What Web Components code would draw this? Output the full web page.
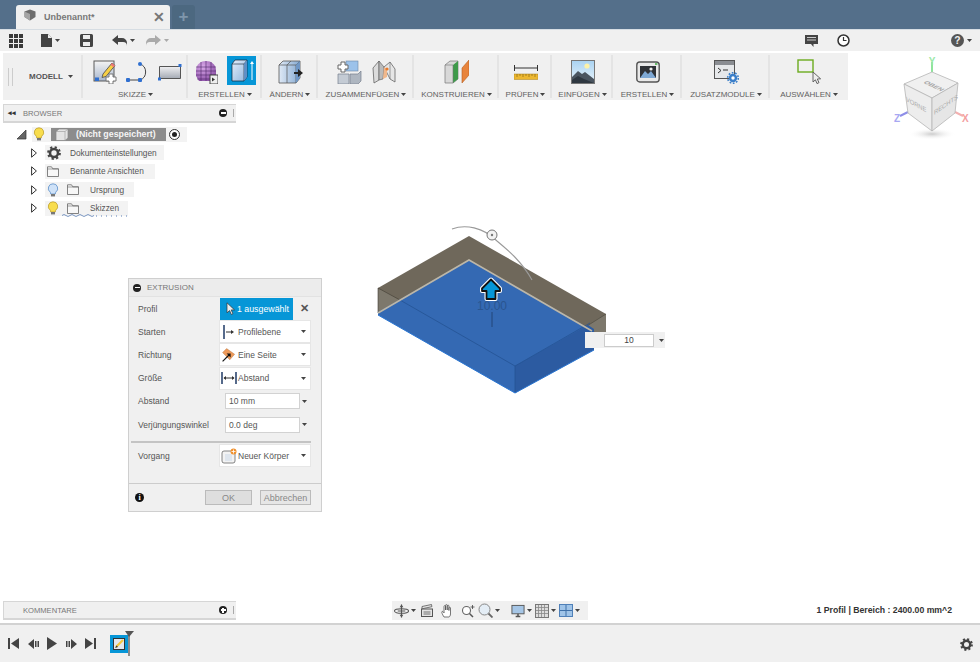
<!DOCTYPE html>
<html lang="de"><head><meta charset="utf-8"><title>Fusion</title>
<style>
html,body{margin:0;padding:0;background:#fff;overflow:hidden}
body{font:9px "Liberation Sans",Arial,sans-serif;color:#555}
</style></head><body>
<fx-app>
  <fx-titlebar></fx-titlebar>
  <fx-quickbar></fx-quickbar>
  <fx-toolbar>
    <fx-modeswitch></fx-modeswitch>
    <tool-group label="SKIZZE" w="105" gap="8" pad="4"><fx-icon name="sketch"></fx-icon><fx-icon name="arc"></fx-icon><fx-icon name="rect"></fx-icon></tool-group>
    <tool-group label="ERSTELLEN" w="74" gap="9"><fx-icon name="mesh"></fx-icon><fx-icon name="extrude" active></fx-icon></tool-group>
    <tool-group label="ÄNDERN" w="56"><fx-icon name="press"></fx-icon></tool-group>
    <tool-group label="ZUSAMMENFÜGEN" w="96" gap="9"><fx-icon name="join"></fx-icon><fx-icon name="joint"></fx-icon></tool-group>
    <tool-group label="KONSTRUIEREN" w="85"><fx-icon name="plane"></fx-icon></tool-group>
    <tool-group label="PRÜFEN" w="53"><fx-icon name="measure"></fx-icon></tool-group>
    <tool-group label="EINFÜGEN" w="61"><fx-icon name="picture"></fx-icon></tool-group>
    <tool-group label="ERSTELLEN" w="69"><fx-icon name="render"></fx-icon></tool-group>
    <tool-group label="ZUSATZMODULE" w="88"><fx-icon name="addin"></fx-icon></tool-group>
    <tool-group label="AUSWÄHLEN" w="78" last><fx-icon name="select"></fx-icon></tool-group>
  </fx-toolbar>
  <fx-viewport>
    <fx-panel-bar style="top:4px" label="BROWSER" sign="minus" back></fx-panel-bar>
    <fx-tree>
      <tree-row level="0" chip="155"></tree-row>
      <tree-row level="1" icon="gear" text="Dokumenteinstellungen" chip="119" tx="9"></tree-row>
      <tree-row level="1" icon="folder" text="Benannte Ansichten" chip="110" tx="11"></tree-row>
      <tree-row level="1" icon="bulbB" icon2="folder" text="Ursprung" chip="89" tx="11"></tree-row>
      <tree-row level="1" icon="bulbY" icon2="folder" text="Skizzen" chip="83" tx="11" wavy></tree-row>
    </fx-tree>
    <fx-dialog heading="EXTRUSION">
      <dlg-row label="Profil"><dlg-picked>1 ausgewählt</dlg-picked></dlg-row>
      <dlg-row label="Starten"><dlg-select icon="dStart">Profilebene</dlg-select></dlg-row>
      <dlg-row label="Richtung"><dlg-select icon="dDir">Eine Seite</dlg-select></dlg-row>
      <dlg-row label="Größe"><dlg-select icon="dSize">Abstand</dlg-select></dlg-row>
      <dlg-row label="Abstand"><dlg-input>10 mm</dlg-input></dlg-row>
      <dlg-row label="Verjüngungswinkel"><dlg-input>0.0 deg</dlg-input></dlg-row>
      <dlg-sep></dlg-sep>
      <dlg-row label="Vorgang"><dlg-select icon="dNew">Neuer Körper</dlg-select></dlg-row>
    </fx-dialog>
    <fx-model></fx-model>
    <fx-dim-input>10</fx-dim-input>
    <fx-viewcube></fx-viewcube>
    <fx-panel-bar style="top:501px" label="KOMMENTARE" sign="plus"></fx-panel-bar>
    <fx-navbar></fx-navbar>
    <fx-status>1 Profil | Bereich : 2400.00 mm^2</fx-status>
  </fx-viewport>
  <fx-timeline></fx-timeline>
</fx-app>
<script>
const FONT='"Liberation Sans",Arial,sans-serif';
const caret=(c='#444')=>`<svg width="5" height="3" viewBox="0 0 5 3" style="display:block"><path d="M0 0h5L2.500 3z" fill="${c}"/></svg>`;
const ICONS={
sketch:[24,24,`<defs><linearGradient id="a" x1="0" y1="0" x2="0" y2="1"><stop offset="0" stop-color="#f4f4f4"/><stop offset="1" stop-color="#a8b6cc"/></linearGradient></defs>
<rect x="1" y="1" width="20" height="20" fill="url(#a)" stroke="#5a5a5a"/><path d="M10 14 19 3l3 2.500-9 11-4 1z" fill="#f6cf45" stroke="#555" stroke-width=".9"/><path d="M19 3l3 2.500-1.500 1.800-3-2.500z" fill="#e77"/><rect x="2" y="17.500" width="4" height="3.500" fill="#2f6fd0"/><path d="M16 14h4v3h3v4h-3v3h-4v-3h-3v-4h3z" fill="#fff" stroke="#777"/>`],
arc:[25,20,`<path d="M3 18H15M15 18A8.500 8.500 0 0 0 15 2" fill="none" stroke="#444" stroke-width="1"/><rect x="1" y="16" width="4" height="4" rx="1" fill="#2f6fd0"/><rect x="13" y="16" width="4" height="4" rx="1" fill="#2f6fd0"/><rect x="13" y="0" width="4" height="4" rx="2" fill="#2f6fd0"/>`],
rect:[24,18,`<defs><linearGradient id="a" x1="0" y1="0" x2="0" y2="1"><stop offset="0" stop-color="#f0f0f2"/><stop offset="1" stop-color="#a4aab4"/></linearGradient></defs><path d="M1.500 3.500H22.500V15.500H1.500z" fill="url(#a)" stroke="#555"/><rect x="20.500" y="1" width="3" height="3" fill="#2f6fd0"/><rect x="0" y="14.500" width="3" height="3" fill="#2f6fd0"/>`],
mesh:[23,24,`<defs><radialGradient id="a" cx=".35" cy=".3" r=".9"><stop offset="0" stop-color="#d9a9e8"/><stop offset="1" stop-color="#7d3f9a"/></radialGradient></defs><path d="M1 11C1 4 6 1 11 1s10 3 10 10v5l-2 5H4l-3-5z" fill="url(#a)"/><path d="M1 7h20M1 11h20M1 15h20M2 19h18M6 2v19M11 1v20M16 2v19" stroke="#4f2668" stroke-width=".6" fill="none"/><rect x="15" y="15" width="8" height="9" fill="#eee" stroke="#444"/><path d="M17 17.500l3 2-3 2z" fill="#333"/>`],
extrude:[29,29,`<defs><linearGradient id="a" x1="0" y1="0" x2="1" y2="1"><stop offset="0" stop-color="#e4eefb"/><stop offset="1" stop-color="#8fb4dc"/></linearGradient></defs><rect width="29" height="29" fill="#0696d7"/><path d="M5 8 8 4H20V21L17 25H5z" fill="url(#a)" stroke="#123" stroke-width=".7"/><path d="M5 8H17V25M17 8 20 4" fill="none" stroke="#123" stroke-width=".6"/><path d="M17 8 20 4V21L17 25z" fill="#5f8fc5"/><path d="M25 24V7" stroke="#fff" stroke-width="1"/><path d="M23 8l2-3 2 3z" fill="#fff"/>`],
press:[25,24,`<defs><linearGradient id="a" x1="0" y1="0" x2="1" y2="0"><stop offset="0" stop-color="#dfe9f5"/><stop offset="1" stop-color="#84a9d2"/></linearGradient></defs><path d="M1 5 5 1H22V18L18 23H1z" fill="url(#a)" stroke="#555" stroke-width=".8"/><path d="M9 5 13 1M9 5V23M1 5H18V23M18 5 22 1" fill="none" stroke="#555" stroke-width=".7"/><path d="M18 5 22 1V18L18 23z" fill="#6f97c6"/><path d="M16 12h4V9l5 4-5 4v-3h-4z" fill="#222"/>`],
join:[25,24,`<rect x="9" y="1" width="12" height="10" fill="#9cc2ea" stroke="#6d87a6" stroke-width=".6"/><path d="M4 2h4v3h3v4H8v3H4V9H1V5h3z" fill="#fff" stroke="#666"/><path d="M1 14h11v10H1z" fill="#c4cbd4" stroke="#77808c" stroke-width=".7"/><path d="M13 14h8l3-3v10l-3 3h-8z" fill="#aeb6c0" stroke="#77808c" stroke-width=".7"/>`],
joint:[25,24,`<path d="M2 8 8 1V20L3 23z" fill="#dcdcdc" stroke="#666" stroke-width=".8"/><path d="M8 1l5 6-1 12-4 1z" fill="#bbb" stroke="#666" stroke-width=".7"/><path d="M13 7l6-5 5 7v13l-5-3z" fill="#e6e6e6" stroke="#666" stroke-width=".8"/><path d="M13 7l3 2v8l-4 2z" fill="#f0b88c"/><path d="M19 2V19" stroke="#777" stroke-width=".7"/><circle cx="16" cy="9" r="1.600" fill="#e87a2c"/>`],
plane:[25,25,`<path d="M1 6 6 2H14V20L9 24H1z" fill="#d8d8d8" stroke="#777" stroke-width=".7"/><path d="M9 6 14 2V20L9 24z" fill="#3e9a4a"/><path d="M1 6H9V24" fill="none" stroke="#777" stroke-width=".6"/><path d="M18 9 25 1V16L18 24z" fill="#e8843c" stroke="#b55f22" stroke-width=".6"/>`],
measure:[24,16,`<path d="M.5 1v6M23.500 1v6M1 4h22" stroke="#333" stroke-width="1" fill="none"/><rect x="0" y="10" width="24" height="5.500" fill="#ecb730" stroke="#a9801c" stroke-width=".5"/><path d="M3 10v3M6 10v2M9 10v3M12 10v2M15 10v3M18 10v2M21 10v3" stroke="#7a5a10" stroke-width=".6"/>`],
picture:[24,24,`<defs><linearGradient id="a" x1="0" y1="0" x2="0" y2="1"><stop offset="0" stop-color="#a9d3f2"/><stop offset="1" stop-color="#eaf4fb"/></linearGradient></defs><rect x=".5" y=".5" width="23" height="23" fill="url(#a)" stroke="#777"/><circle cx="16" cy="6" r="2.600" fill="#fdf2a8"/><path d="M1 23V17L7 11l4 3 3-2 9 7v4z" fill="#4a5560"/><path d="M1 23v-3l6-4 6 3 10 4z" fill="#2f3841"/>`],
render:[24,24,`<rect x=".8" y="2" width="22.400" height="20" rx="3" fill="#e9e9e9" stroke="#555" stroke-width="1.400"/><rect x="4" y="6" width="16" height="12" fill="#2f3237"/><path d="M4 18l5-7 3 3 3-3 5 7z" fill="#7ea8d4"/><circle cx="15" cy="9" r="1.600" fill="#eee"/><rect x="19" y="3.200" width="2.400" height="1.600" fill="#4caf50"/>`],
addin:[25,24,`<rect x=".5" y=".5" width="20" height="18" fill="#e6e8ea" stroke="#555"/><rect x="1" y="1" width="19" height="4" fill="#8a8d92"/><path d="M4 8l3 2.500L4 13" fill="none" stroke="#333" stroke-width="1"/><path d="M9 10h5" stroke="#333" stroke-width="1"/><circle cx="19" cy="18" r="4.200" fill="#3b7fc9"/><circle cx="19" cy="18" r="5.300" fill="none" stroke="#3b7fc9" stroke-width="1.600" stroke-dasharray="1.700 1.600"/><circle cx="19" cy="18" r="1.700" fill="#fff"/>`],
select:[25,26,`<rect x="1" y="1" width="15" height="12" fill="none" stroke="#6cab1e" stroke-width="1.400"/><path d="M16 13v10l2.400-2.200 1.600 3.800 2-1-1.700-3.600 3.300-.2z" fill="#eee" stroke="#555" stroke-width=".9"/>`],
bulbY:[12,14,`<path d="M6 .8a4.600 4.600 0 0 1 2.700 8.400L8.300 11H3.700l-.4-1.800A4.600 4.600 0 0 1 6 .8z" fill="#f8dd4d" stroke="#b79a2a" stroke-width=".7"/><rect x="4" y="11" width="4" height="2.400" fill="#777"/>`],
bulbB:[12,14,`<path d="M6 .8a4.600 4.600 0 0 1 2.700 8.400L8.300 11H3.700l-.4-1.800A4.600 4.600 0 0 1 6 .8z" fill="#cfe2f8" stroke="#5d8fc9" stroke-width=".8"/><rect x="4" y="11" width="4" height="2.400" fill="#777"/>`],
body:[14,13,`<path d="M1 3.500 4 1h9v9l-3 2.500H1z" fill="#e4e4e4" stroke="#888" stroke-width=".7"/><path d="M1 3.500h9v9M10 3.500 13 1" fill="none" stroke="#999" stroke-width=".6"/>`],
gear:[14,14,`<circle cx="7" cy="7" r="4" fill="none" stroke="#444" stroke-width="2.600"/><circle cx="7" cy="7" r="5.800" fill="none" stroke="#444" stroke-width="2.200" stroke-dasharray="2.200 2.350"/>`],
folder:[12,11,`<path d="M.5 10.500V.8h4l1.300 2h5.700v7.700z" fill="#f7f7f7" stroke="#666" stroke-width=".8"/><path d="M.5 3h11" stroke="#666" stroke-width=".6"/>`],
dStart:[14,16,`<path d="M2 1v14" stroke="#1f3a66" stroke-width="1.500"/><path d="M4 8h6" stroke="#333"/><path d="M9 6l3 2-3 2z" fill="#333"/>`],
dDir:[20,18,`<path d="M2 6 7 1 17 8l-6 7z" fill="#ee9a5a" stroke="#a96a34" stroke-width=".5"/><path d="M2 17 10 9" stroke="#111" stroke-width="1.400"/><path d="M7 7h5v5z" fill="#111"/>`],
dSize:[16,14,`<path d="M1 1v12M15 1v12" stroke="#1f3a66" stroke-width="1.500"/><path d="M3 7h10" stroke="#333"/><path d="M5 5 2.500 7 5 9zM11 5l2.500 2L11 9z" fill="#333"/>`],
dNew:[16,16,`<rect x="1" y="3" width="13" height="12" rx="2" fill="#f3f3f3" stroke="#666" stroke-width=".8"/><path d="M4 6h7v7H4z" fill="#dfe6ee"/><circle cx="12.500" cy="3.500" r="3" fill="#f0902c"/><path d="M12.500 1.500v4M10.500 3.500h4" stroke="#fff" stroke-width=".8"/>`],
pointer:[9,13,`<path d="M1 .8v10l2.600-2.300 1.700 4 1.600-.8-1.700-3.800h3.300z" fill="#eee" stroke="#333" stroke-width=".7"/>`],
};
function icon(name,extra=''){const [w,h,b]=ICONS[name];return `<svg width="${w}" height="${h}" viewBox="0 0 ${w} ${h}" style="display:block;${extra}">${b}</svg>`}
function def(tag,css,html,init){
  customElements.define(tag,class extends HTMLElement{
    connectedCallback(){
      if(this.shadowRoot)return;
      const r=this.attachShadow({mode:'open'});
      const h=typeof html==='function'?html(this):html;
      r.innerHTML=`<style>${css}</style>${h}`;
      if(init)init(this,r);
    }
  });
}
def('fx-app',`:host{display:flex;flex-direction:column;width:980px;height:662px;font:9px ${FONT}}`,`<slot></slot>`);
def('fx-icon',`:host{display:block;flex:none}:host([active]){margin-top:-3px}`,e=>icon(e.getAttribute('name')));
def('fx-titlebar',`:host{display:flex;align-items:flex-end;height:29px;background:#546f8a;padding-left:16px;box-sizing:border-box;gap:2px;flex:none}
.tab{width:154px;height:24px;background:#f0f0f0;border-radius:3px 3px 0 0;display:flex;align-items:center;box-sizing:border-box;padding:0 5px 0 8px;font:bold 9px ${FONT};color:#777}
.tab svg{margin-right:8px;margin-top:-4px}.tab span{flex:1}
.x{font:bold 14px ${FONT};color:#777;line-height:1}
.new{width:23px;height:24px;background:#4c6880;border-radius:3px 3px 0 0;color:#7f96ab;font:bold 17px ${FONT};text-align:center;line-height:24px}`,
`<div class="tab"><svg width="12" height="12" viewBox="0 0 12 12"><path d="M6 .5 11.500 2.500V8L6 11.500.5 8V2.500z" fill="#6d6d6d"/><path d="M.5 2.500 6 5v6.500L.5 8z" fill="#a5a5a5"/></svg><span>Unbenannt*</span><div class="x">✕</div></div><div class="new">+</div>`);
def('fx-quickbar',`:host{display:flex;height:22px;background:#f0f0f0;border-top:1px solid #d6dde3;box-sizing:border-box;flex:none;position:relative;align-items:center}
.i{display:flex;align-items:center;gap:3px}`,
`<div class="i" style="margin-left:9px"><svg width="14" height="14" viewBox="0 0 14 14"><path d="M0 0h4v4H0zM5 0h4v4H5zM10 0h4v4h-4zM0 5h4v4H0zM5 5h4v4H5zM10 5h4v4h-4zM0 10h4v4H0zM5 10h4v4H5zM10 10h4v4h-4z" fill="#3a3a3a"/></svg></div>
<div class="i" style="margin-left:18px"><svg width="11" height="13" viewBox="0 0 11 13"><path d="M0 0h7l4 4v9H0z" fill="#444"/><path d="M7 0v4h4" fill="#eee"/></svg>${caret()}</div>
<div class="i" style="margin-left:20px"><svg width="13" height="13" viewBox="0 0 13 13"><path d="M0 1.500A1.500 1.500 0 0 1 1.500 0h10A1.500 1.500 0 0 1 13 1.500v10a1.500 1.500 0 0 1-1.500 1.500h-10A1.500 1.500 0 0 1 0 11.500z" fill="#444"/><rect x="3" y="1" width="7" height="4" fill="#eee"/><rect x="3" y="8" width="7" height="4" fill="#eee"/></svg></div>
<div class="i" style="margin-left:19px"><svg width="15" height="11" viewBox="0 0 15 11"><path d="M6 0v3h4a5 5 0 0 1 5 5v3a4 4 0 0 0-4-4H6v3L0 5z" fill="#444"/></svg>${caret()}</div>
<div class="i" style="margin-left:11px"><svg width="15" height="11" viewBox="0 0 15 11"><path d="M9 0v3H5a5 5 0 0 0-5 5v3a4 4 0 0 1 4-4h5v3l6-5z" fill="#aaa"/></svg>${caret('#aaa')}</div>
<div class="i" style="margin-left:636px"><svg width="13" height="12" viewBox="0 0 13 12"><path d="M0 0h13v9H8.500v3L6 9H0z" fill="#444"/><path d="M2 2.500h9M2 5h9" stroke="#eee" stroke-width=".8"/></svg></div>
<div class="i" style="margin-left:19px"><svg width="13" height="13" viewBox="0 0 13 13"><circle cx="6.500" cy="6.500" r="5.500" fill="#fff" stroke="#333" stroke-width="1.500"/><path d="M6.500 3v3.500h3" fill="none" stroke="#333" stroke-width="1.200"/></svg></div>
<div class="i" style="margin-left:101px"><svg width="13" height="13" viewBox="0 0 12 12"><circle cx="6" cy="6" r="6" fill="#555"/><text x="6" y="9.500" text-anchor="middle" font-family="Liberation Sans" font-weight="bold" font-size="9.500" fill="#f0f0f0">?</text></svg>${caret()}</div>`);
def('fx-toolbar',`:host{display:flex;width:845px;height:47px;margin:2px 0 0 3px;background:#f0f0f0;flex:none}`,`<slot></slot>`);
def('fx-modeswitch',`:host{display:flex;width:80px;align-items:center;box-sizing:border-box;position:relative;border-right:2px solid #e4e4e4;margin:2px 0 2px;font:bold 8px ${FONT};color:#555}
.g{width:3px;height:18px;border:solid #ccc;border-width:0 1px;margin-left:5px}
span{margin-left:16px}.c{margin-left:5px;margin-top:-1px}`,`<div class="g"></div><span>MODELL</span><div class="c">${caret()}</div>`);
def('tool-group',`:host{display:flex;flex-direction:column;align-items:center;box-sizing:border-box;position:relative;height:47px;flex:none}
.sep{position:absolute;right:0;top:2px;bottom:2px;width:2px;background:#e4e4e4}
.icons{height:35px;display:flex;align-items:center;justify-content:center;padding-top:2px;box-sizing:border-box}
.l{display:flex;align-items:center;gap:2px;font:8px ${FONT};color:#5f5f5f;height:12px;white-space:nowrap}`,
e=>`${e.hasAttribute('last')?'':'<div class="sep"></div>'}<div class="icons" style="gap:${e.getAttribute('gap')||0}px;padding-left:${e.getAttribute('pad')||0}px"><slot></slot></div><div class="l">${e.getAttribute('label')}${caret()}</div>`,
e=>{e.style.width=e.getAttribute('w')+'px'});
def('fx-viewport',`:host{display:block;position:relative;flex:1;min-height:0}`,`<slot></slot>`);
def('fx-panel-bar',`:host{position:absolute;left:3px;width:233px;height:19px;background:#f0f0f0;border:solid #d6d6d6;border-width:1px 0 2px 1px;box-sizing:border-box;display:flex;align-items:center;font:7.600px ${FONT};color:#777;padding:0 2px 0 4px}
.b{width:15px;font:bold 7px ${FONT};color:#333}.l{flex:1}
.s{width:8px;height:8px;border-radius:50%;background:#222;position:relative;margin-right:4px}.s:after{content:"";position:absolute;left:1.500px;right:1.500px;top:3.250px;height:1.500px;background:#fff}
.s.p:before{content:"";position:absolute;top:1.500px;bottom:1.500px;left:3.250px;width:1.500px;background:#fff}
.e{width:2px;height:8px;border:solid #aaa;border-width:0 1px 0 0}`,
e=>`<div class="b">${e.hasAttribute('back')?'◂◂':''}</div><div class="l">${e.getAttribute('label')}</div><div class="s ${e.getAttribute('sign')==='plus'?'p':''}"></div><div class="e"></div>`);
def('fx-tree',`:host{position:absolute;left:15px;top:25px;display:flex;flex-direction:column;gap:0}`,`<slot></slot>`);
const triOpen=`<svg width="11" height="11" viewBox="0 0 11 11" style="display:block"><path d="M1 10 10 1v9z" fill="#666" stroke="#333" stroke-width=".7"/></svg>`;
const triClosed=`<svg width="6" height="10" viewBox="0 0 6 10" style="display:block"><path d="M.6.8 5.400 5 .6 9.200z" fill="#fff" stroke="#333" stroke-width="1"/></svg>`;
def('tree-row',`:host{display:flex;align-items:center;height:18.500px}
.tri{flex:none;display:flex;align-items:center}
.chip{display:flex;align-items:center;height:15px;background:#f3f3f3;position:relative;box-sizing:border-box}
.t{font:8.300px ${FONT};color:#555;white-space:nowrap}
.name{background:#8c8c8c;color:#f5f5f5;font:bold 8.800px ${FONT};height:13px;display:flex;align-items:center;width:115px;box-sizing:border-box;padding-left:4px;margin-left:6px}
.name span{margin-left:7px}
.radio{width:9px;height:9px;border:1px solid #333;border-radius:50%;margin-left:3px;position:relative;background:#fff}
.radio:after{content:"";position:absolute;inset:2px;border-radius:50%;background:#222}
.w{position:absolute;left:17px;right:0;bottom:-1px;height:3px}`,
e=>{
 const lvl=e.getAttribute('level'),chip=e.getAttribute('chip');
 if(lvl==='0')return `<div class="tri" style="width:16px;margin-left:1px">${triOpen}</div><div class="chip" style="width:${chip}px;padding-left:1px">${icon('bulbY')}<div class="name">${icon('body')}<span>(Nicht gespeichert)</span></div><div class="radio"></div></div>`;
 const i2=e.getAttribute('icon2');
 return `<div class="tri" style="width:14px;margin-left:16px">${triClosed}</div><div class="chip" style="width:${chip}px;padding-left:1px">`+
 (i2?`<div style="margin-left:1px">${icon(e.getAttribute('icon'))}</div><div style="margin:0 0 0 8px">${icon(i2)}</div><div class="t" style="margin-left:${e.getAttribute('tx')}px">${e.getAttribute('text')}</div>`
 :`<div style="margin-left:1px">${icon(e.getAttribute('icon'))}</div><div class="t" style="margin-left:${e.getAttribute('tx')}px">${e.getAttribute('text')}</div>`)+
 (e.hasAttribute('wavy')?`<svg class="w" width="66" height="3" viewBox="0 0 66 3"><path d="M0 1.500q2-2 4 0t4 0 4 0 4 0 4 0 4 0 4 0 4 0" fill="none" stroke="#5b7fb5" stroke-width=".8"/><path d="M34 2H66" stroke="#5b7fb5" stroke-width="1" stroke-dasharray="1 4"/></svg>`:'')+`</div>`;
});
def('fx-dialog',`:host{position:absolute;left:128px;top:178px;width:194px;height:234px;background:#f0f0f0;border:1px solid #cfcfcf;box-sizing:border-box;display:flex;flex-direction:column;font:9px ${FONT};color:#555}
.h{height:18px;background:#ececec;display:flex;align-items:center;flex:none;border-bottom:1px solid #e2e2e2;box-sizing:border-box;font:8px ${FONT};color:#777}
.dot{width:8px;height:8px;border-radius:50%;background:#222;margin:0 6px 0 4px;position:relative}.dot:after{content:"";position:absolute;left:1.500px;right:1.500px;top:3.250px;height:1.500px;background:#fff}
.b{flex:1;display:flex;flex-direction:column}
.f{height:28px;border-top:1px solid #ccc;flex:none;display:flex;align-items:center;padding:0 10px 0 6px;box-sizing:border-box}
.info{width:9px;height:9px;border-radius:50%;background:#111;color:#fff;font:bold 8px "Liberation Serif",serif;text-align:center;line-height:9px}
.btn{height:15px;box-sizing:border-box;border:1px solid #bbb;display:flex;align-items:center;justify-content:center;font:9px ${FONT};color:#888;background:#e6e6e6}
.sp{flex:1}`,
e=>`<div class="h"><div class="dot"></div>${e.getAttribute('heading')}</div><div class="b"><slot></slot></div><div class="f"><div class="info">i</div><div class="sp"></div><div class="btn" style="width:47px;margin-right:8px;background:#dedede">OK</div><div class="btn" style="width:51px">Abbrechen</div></div>`);
def('dlg-row',`:host{display:flex;align-items:center;height:23.200px;flex:none;padding-left:9px}
.l{width:82px;flex:none;font:8.500px ${FONT};color:#555;white-space:nowrap}`,e=>`<div class="l">${e.getAttribute('label')}</div><slot></slot>`);
def('dlg-sep',`:host{display:block;height:2px;background:#c4c4c4;margin:5px 10px 1px 2px;flex:none}`,'');
def('dlg-picked',`:host{display:flex;align-items:center}
.b{width:73px;height:22px;background:#0696d7;color:#fff;display:flex;align-items:center;font:8.800px ${FONT};box-sizing:border-box;padding-left:6px;gap:2px}
.x{margin-left:7px;font:bold 11px ${FONT};color:#555}`,`<div class="b">${icon('pointer')}<slot></slot></div><div class="x">✕</div>`);
def('dlg-select',`:host{display:flex;align-items:center;width:90px;height:21px;background:#fff;box-shadow:0 0 0 1px #e6e6e6;box-sizing:border-box;font:8.500px ${FONT};color:#555;padding:0 4px 0 1px}
.i{width:16px;flex:none;display:flex;justify-content:center;margin-right:1px}
.t{flex:1;white-space:nowrap}`,e=>`<div class="i">${icon(e.getAttribute('icon'))}</div><div class="t"><slot></slot></div>${caret()}`);
def('dlg-input',`:host{display:flex;align-items:center;margin-left:5px;font:8.500px ${FONT};color:#555}
.b{width:75px;height:16px;background:#fff;border:1px solid #d2d2d2;box-sizing:border-box;padding-left:3px;display:flex;align-items:center}
.c{margin-left:2px}`,`<div class="b"><slot></slot></div><div class="c">${caret()}</div>`);
def('fx-model',`:host{position:absolute;left:370px;top:120px;width:250px;height:180px;display:block}svg{display:block}`,
`<svg width="250" height="180" viewBox="370 220 250 180">
<path d="M469 236 378 288V315L469 262 606 340V314z" fill="#6f685b"/>
<path d="M378 288 400 300 378 313z" fill="#7d786c" stroke="#3f3b33" stroke-width=".6"/>
<path d="M587 326 606 314V340z" fill="#7d786c"/>
<path d="M606 314 587 326" stroke="#4a463d" stroke-width=".6"/>
<path d="M469 260 378 312V315L515 393 606 341 590 329z" fill="#3469b3"/>
<path d="M515 366 588 325 594 329V350L515 393z" fill="#2c5ba1"/>
<path d="M400 300 515 366V393M515 366 590 323" fill="none" stroke="#23508f" stroke-width=".7"/>
<path d="M378 313 469 260 592 331" fill="none" stroke="#bdb7a8" stroke-width="1.600"/>
<path d="M378 315 515 393 594 350" fill="none" stroke="#2a76d2" stroke-width="1"/>
<path d="M452 229C465 224 483 227 497 241 509 251 522 262 532 280" fill="none" stroke="#9a9a9a" stroke-width="1.100"/>
<circle cx="492" cy="235" r="5" fill="#f2f2f2" stroke="#777" stroke-width="1"/><circle cx="492" cy="235" r="1.200" fill="#777"/>
<text x="492" y="310" text-anchor="middle" font-family="Liberation Sans" font-size="12" fill="#2a5590">10.00</text>
<path d="M492 312V327" stroke="#1f3d6b" stroke-width=".8"/>
<path d="M491 279.500 500 288.500 500 291 495.500 291 495.500 299 486.500 299 486.500 291 482 291 482 288.500z" fill="none" stroke="#fff" stroke-width="4" stroke-linejoin="round"/>
<path d="M491 279.500 500 288.500 500 291 495.500 291 495.500 299 486.500 299 486.500 291 482 291 482 288.500z" fill="#0696d7" stroke="#111" stroke-width="1.800" stroke-linejoin="round"/>
</svg>`);
def('fx-dim-input',`:host{position:absolute;left:585px;top:232px;width:80px;height:16px;background:#f0f0f0;display:flex;align-items:center;font:8.500px ${FONT};color:#444;box-sizing:border-box;padding-left:19px}
.b{width:50px;height:13px;background:#fff;border:1px solid #ccc;box-sizing:border-box;text-align:center;line-height:11px}.c{margin-left:5px}`,`<div class="b"><slot></slot></div><div class="c">${caret()}</div>`);
def('fx-viewcube',`:host{position:absolute;left:890px;top:-50px;width:85px;height:100px;display:block}svg{display:block}`,
`<svg width="85" height="100" viewBox="890 50 85 100" font-family="Liberation Sans">
<defs><radialGradient id="s"><stop offset="0" stop-color="#ccc"/><stop offset="1" stop-color="#fff" stop-opacity="0"/></radialGradient></defs>
<ellipse cx="932" cy="134" rx="24" ry="6" fill="url(#s)"/>
<path d="M932 72V62" stroke="#8fe49c" stroke-width="2"/><text x="932" y="65" text-anchor="middle" font-size="10" font-weight="bold" fill="#9be8a8">Y</text>
<path d="M955 112 963 116" stroke="#f4b0b0" stroke-width="2"/><text x="962" y="122" font-size="10" font-weight="bold" fill="#f3a0a0">X</text>
<path d="M908 112 900 116" stroke="#8e8ee8" stroke-width="2"/><text x="894" y="122" font-size="10" font-weight="bold" fill="#a8a8f2">Z</text>
<path d="M932 72 958 83 932 98 904 84z" fill="#f0f0f0" stroke="#b5b5b5" stroke-width=".8"/>
<path d="M904 84 932 98V131L908 113z" fill="#ededed" stroke="#b5b5b5" stroke-width=".8"/>
<path d="M958 83 932 98V131L955 113z" fill="#e6e6e6" stroke="#b5b5b5" stroke-width=".8"/>
<text transform="matrix(.9 .42 -.8 .42 932 87)" text-anchor="middle" font-size="7" fill="#a5a5a5" font-weight="bold">OBEN</text>
<text transform="matrix(.88 .5 0 1 906 101)" font-size="6.500" fill="#aaa">VORNE</text>
<text transform="matrix(.9 -.62 0 1 934 115)" font-size="6.500" fill="#aaa">RECHTS</text>
</svg>`);
const navIcons=`
<svg width="15" height="14" viewBox="0 0 16 14"><path d="M8 0v14M4 7h8" stroke="#555" stroke-width="1.200"/><path d="M8 0 6 3h4zM8 14l-2-3h4z" fill="#555"/><ellipse cx="8" cy="7" rx="7.500" ry="2.500" fill="none" stroke="#555" stroke-width="1.100"/></svg>`;
def('fx-navbar',`:host{position:absolute;left:392px;top:501px;width:196px;height:19px;background:#f0f0f0;display:flex;align-items:center;box-sizing:border-box;padding-left:2px}
.i{display:flex;align-items:center;gap:2px}`,
`<div class="i">${navIcons}${caret()}</div>
<div class="i" style="margin-left:5px"><svg width="12" height="13" viewBox="0 0 12 13"><rect x=".5" y="5" width="11" height="7.500" fill="#e4e4e4" stroke="#555"/><path d="M1 2.500 10.500.5l.4 2.200L1 4.800z" fill="#e4e4e4" stroke="#555" stroke-width=".8"/><path d="M2.500 8h7M2.500 10h7" stroke="#555" stroke-width=".8"/></svg></div>
<div class="i" style="margin-left:8px"><svg width="12" height="14" viewBox="0 0 12 14"><path d="M3 13C1 10 .5 8 1 7.500s1.500.5 2 1.500V2.500c0-1.200 1.500-1.200 1.500 0V6V1.500c0-1.200 1.700-1.200 1.700 0V6V2c0-1.200 1.700-1.200 1.700 0v4.500V4c0-1 1.600-1 1.600 0v6c0 1.500-1 3-1.500 3z" fill="#fff" stroke="#555" stroke-width=".8"/></svg></div>
<div class="i" style="margin-left:8px"><svg width="14" height="14" viewBox="0 0 14 14"><circle cx="5.500" cy="6.500" r="4" fill="#fff" stroke="#666" stroke-width="1.100"/><path d="M8.500 9.500 12 13" stroke="#555" stroke-width="1.500"/><path d="M11.500 1v4M9.500 3h4" stroke="#444" stroke-width=".8"/></svg></div>
<div class="i" style="margin-left:3px"><svg width="15" height="15" viewBox="0 0 15 15"><circle cx="6.500" cy="6.500" r="5.500" fill="#e4edf5" stroke="#888" stroke-width="1"/><path d="M10.500 10.500 14.500 14.500" stroke="#666" stroke-width="1.800"/></svg>${caret()}</div>
<div class="i" style="margin-left:11px"><svg width="14" height="14" viewBox="0 0 15 14"><rect x="1" y="1" width="13" height="9" fill="#a6c6e6" stroke="#555"/><path d="M5 13h5M7.500 10v3" stroke="#555" stroke-width="1.600"/></svg>${caret()}</div>
<div class="i" style="margin-left:3px"><svg width="14" height="14" viewBox="0 0 14 14"><rect x=".5" y=".5" width="13" height="13" fill="#ddd" stroke="#777"/><path d="M3.500 1v12M6.500 1v12M9.500 1v12M1 3.500h12M1 6.500h12M1 9.500h12" stroke="#888" stroke-width=".8"/></svg>${caret()}</div>
<div class="i" style="margin-left:3px"><svg width="14" height="13" viewBox="0 0 14 13"><rect x=".5" y=".5" width="13" height="12" fill="#a0c4e8" stroke="#4f80b8"/><path d="M7 1v11M1 6.500h12" stroke="#3f70a8"/></svg>${caret()}</div>`);
def('fx-status',`:host{position:absolute;right:28px;top:505px;font:bold 8.700px ${FONT};color:#333;white-space:nowrap}`,`<slot></slot>`);
def('fx-timeline',`:host{display:flex;height:39px;background:#f0f0f0;border-top:2px solid #d2d2d2;box-sizing:border-box;flex:none;align-items:center;position:relative}
.g{display:flex;align-items:center;margin-left:8px;gap:8.500px}
.item{margin-left:14px;position:relative;width:18px;height:18px;background:#0696d7;display:flex;align-items:center;justify-content:center;margin-top:1px}
.flag{position:absolute;left:15px;top:-4px}
.gear{position:absolute;right:7px;top:13px}`,
`<div class="g">
<svg width="11" height="11" viewBox="0 0 11 11"><path d="M0 0h2v11H0zM11 0v11L3 5.500z" fill="#444"/></svg>
<svg width="11" height="10" viewBox="0 0 11 10"><path d="M6 0v10L0 5zM7 2h1.500v6H7zM9.500 2H11v6H9.500z" fill="#444"/></svg>
<svg width="10" height="13" viewBox="0 0 10 13"><path d="M0 0 10 6.500 0 13z" fill="#444"/></svg>
<svg width="11" height="10" viewBox="0 0 11 10"><path d="M5 0v10l6-5zM0 2h1.500v6H0zM2.500 2H4v6H2.500z" fill="#444"/></svg>
<svg width="11" height="11" viewBox="0 0 11 11"><path d="M0 0v11l8-5.500zM9 0h2v11H9z" fill="#444"/></svg></div>
<div class="item"><svg width="12" height="12" viewBox="0 0 12 12"><rect x=".5" y=".5" width="11" height="11" fill="#e4e8ee" stroke="#333"/><path d="M3 9 10 2" stroke="#f4c63c" stroke-width="2.200"/><path d="M2 10l1.500-2.500L5 9z" fill="#333"/></svg>
<svg class="flag" width="9" height="25" viewBox="0 0 9 25"><path d="M0 0h9L4 6z" fill="#555"/><path d="M4 3V25" stroke="#555" stroke-width="1.300"/></svg></div>
<svg class="gear" width="13" height="13" viewBox="0 0 14 14">${ICONS.gear[2]}</svg>`);
</script>
</body></html>
